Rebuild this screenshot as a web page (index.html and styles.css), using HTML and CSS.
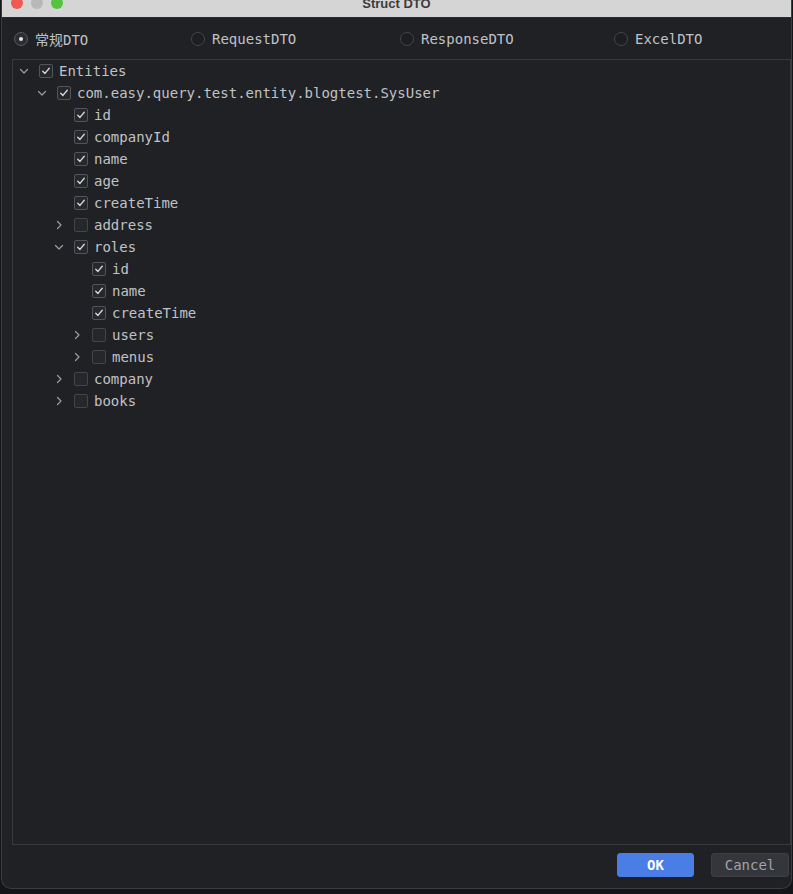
FILE: index.html
```html
<!DOCTYPE html>
<html>
<head>
<meta charset="utf-8">
<link rel="stylesheet" href="styles.css">
</head>
<body>
<div class="window">
  <div class="titlebar">
    <div class="lights">
      <span class="light red"></span>
      <span class="light grey"></span>
      <span class="light green"></span>
    </div>
    <div class="title">Struct DTO</div>
    <div></div>
  </div>
  <div class="radios">
    <label class="radio"><span class="dot on"></span><span>常规DTO</span></label>
    <label class="radio"><span class="dot"></span><span>RequestDTO</span></label>
    <label class="radio"><span class="dot"></span><span>ResponseDTO</span></label>
    <label class="radio"><span class="dot"></span><span>ExcelDTO</span></label>
  </div>
  <div class="panel">
    <div class="row l0"><span class="chev"><svg width="10" height="10" viewBox="0 0 10 10"><path d="M1.5 3.5 L5 7 L8.5 3.5" /></svg></span><span class="cb on"><svg viewBox="0 0 14 14"><path d="M3.2 7.2 L5.8 9.8 L10.8 3.8"/></svg></span><span class="txt">Entities</span></div>
    <div class="row l1"><span class="chev"><svg width="10" height="10" viewBox="0 0 10 10"><path d="M1.5 3.5 L5 7 L8.5 3.5" /></svg></span><span class="cb on"><svg viewBox="0 0 14 14"><path d="M3.2 7.2 L5.8 9.8 L10.8 3.8"/></svg></span><span class="txt">com.easy.query.test.entity.blogtest.SysUser</span></div>
    <div class="row l2"><span class="chev"></span><span class="cb on"><svg viewBox="0 0 14 14"><path d="M3.2 7.2 L5.8 9.8 L10.8 3.8"/></svg></span><span class="txt">id</span></div>
    <div class="row l2"><span class="chev"></span><span class="cb on"><svg viewBox="0 0 14 14"><path d="M3.2 7.2 L5.8 9.8 L10.8 3.8"/></svg></span><span class="txt">companyId</span></div>
    <div class="row l2"><span class="chev"></span><span class="cb on"><svg viewBox="0 0 14 14"><path d="M3.2 7.2 L5.8 9.8 L10.8 3.8"/></svg></span><span class="txt">name</span></div>
    <div class="row l2"><span class="chev"></span><span class="cb on"><svg viewBox="0 0 14 14"><path d="M3.2 7.2 L5.8 9.8 L10.8 3.8"/></svg></span><span class="txt">age</span></div>
    <div class="row l2"><span class="chev"></span><span class="cb on"><svg viewBox="0 0 14 14"><path d="M3.2 7.2 L5.8 9.8 L10.8 3.8"/></svg></span><span class="txt">createTime</span></div>
    <div class="row l2"><span class="chev"><svg width="10" height="10" viewBox="0 0 10 10"><path d="M3.5 1.5 L7 5 L3.5 8.5" /></svg></span><span class="cb"></span><span class="txt">address</span></div>
    <div class="row l2"><span class="chev"><svg width="10" height="10" viewBox="0 0 10 10"><path d="M1.5 3.5 L5 7 L8.5 3.5" /></svg></span><span class="cb on"><svg viewBox="0 0 14 14"><path d="M3.2 7.2 L5.8 9.8 L10.8 3.8"/></svg></span><span class="txt">roles</span></div>
    <div class="row l3"><span class="chev"></span><span class="cb on"><svg viewBox="0 0 14 14"><path d="M3.2 7.2 L5.8 9.8 L10.8 3.8"/></svg></span><span class="txt">id</span></div>
    <div class="row l3"><span class="chev"></span><span class="cb on"><svg viewBox="0 0 14 14"><path d="M3.2 7.2 L5.8 9.8 L10.8 3.8"/></svg></span><span class="txt">name</span></div>
    <div class="row l3"><span class="chev"></span><span class="cb on"><svg viewBox="0 0 14 14"><path d="M3.2 7.2 L5.8 9.8 L10.8 3.8"/></svg></span><span class="txt">createTime</span></div>
    <div class="row l3"><span class="chev"><svg width="10" height="10" viewBox="0 0 10 10"><path d="M3.5 1.5 L7 5 L3.5 8.5" /></svg></span><span class="cb"></span><span class="txt">users</span></div>
    <div class="row l3"><span class="chev"><svg width="10" height="10" viewBox="0 0 10 10"><path d="M3.5 1.5 L7 5 L3.5 8.5" /></svg></span><span class="cb"></span><span class="txt">menus</span></div>
    <div class="row l2"><span class="chev"><svg width="10" height="10" viewBox="0 0 10 10"><path d="M3.5 1.5 L7 5 L3.5 8.5" /></svg></span><span class="cb"></span><span class="txt">company</span></div>
    <div class="row l2"><span class="chev"><svg width="10" height="10" viewBox="0 0 10 10"><path d="M3.5 1.5 L7 5 L3.5 8.5" /></svg></span><span class="cb"></span><span class="txt">books</span></div>
  </div>
  <div class="footer">
    <button class="btn ok">OK</button>
    <button class="btn cancel">Cancel</button>
  </div>
</div>
</body>
</html>
```

FILE: styles.css
```css
* { box-sizing: border-box; }
html, body { margin: 0; padding: 0; }
body {
  background: #141518;
  width: 793px;
  height: 894px;
  overflow: hidden;
  font-family: "DejaVu Sans Mono", "Noto Sans CJK SC", monospace;
  color: #c0c2c7;
}
.window {
  margin-left: 1px;
  width: 791px;
  height: 889px;
  background: #1f2125;
  border: 1px solid #3a3c41;
  border-top: none;
  border-radius: 0 0 10px 10px;
  display: flex;
  flex-direction: column;
  overflow: hidden;
}
.titlebar {
  height: 18px;
  flex: none;
  background: #d5d5d5;
  border-bottom: 1px solid #2a2a2a;
  display: grid;
  grid-template-columns: 1fr auto 1fr;
  align-items: start;
}
.lights {
  display: flex;
  gap: 8px;
  padding-left: 9px;
  margin-top: -3px;
}
.light {
  width: 12px;
  height: 12px;
  border-radius: 50%;
  display: block;
}
.red { background: #ee5a52; }
.grey { background: #b8b8b8; }
.green { background: #55c33f; }
.title {
  font-family: "Liberation Sans", Arial, sans-serif;
  font-weight: bold;
  font-size: 13px;
  line-height: 13px;
  margin-top: -3px;
  color: #3c3c3c;
}
.radios {
  height: 41px;
  flex: none;
  display: grid;
  grid-template-columns: 177px 209px 214px 1fr;
  align-items: center;
  padding-left: 12px;
  font-size: 14px;
}
.radio {
  display: flex;
  align-items: center;
  gap: 7px;
}
.dot {
  width: 14px;
  height: 14px;
  border-radius: 50%;
  border: 1px solid #43464b;
  background: #1c1e21;
  display: flex;
  align-items: center;
  justify-content: center;
}
.dot.on {
  border-color: #55585e;
  background: #2b2d31;
}
.dot.on::after {
  content: "";
  width: 4px;
  height: 4px;
  border-radius: 50%;
  background: #e4e5e8;
}
.panel {
  flex: none;
  height: 786px;
  margin-left: 10px;
  width: 779px;
  border: 1px solid #37393e;
}
.row {
  height: 22px;
  display: flex;
  align-items: center;
  font-size: 14px;
  white-space: nowrap;
}
.l0 { padding-left: 3px; }
.l1 { padding-left: 21px; }
.l2 { padding-left: 38px; }
.l3 { padding-left: 56px; }
.chev {
  width: 16px;
  height: 16px;
  display: flex;
  align-items: center;
  justify-content: center;
  margin-right: 7px;
}
.chev svg path {
  fill: none;
  stroke: #9a9da3;
  stroke-width: 1.2;
  stroke-linecap: round;
  stroke-linejoin: round;
}
.cb {
  width: 14px;
  height: 14px;
  border: 1px solid #42454a;
  border-radius: 2px;
  background: #25272b;
  margin-right: 6px;
  display: flex;
}
.cb.on {
  border-color: #51545a;
  background: #26282c;
}
.cb svg {
  width: 12px;
  height: 12px;
}
.cb svg path {
  fill: none;
  stroke: #d5d7dc;
  stroke-width: 1.6;
  stroke-linecap: round;
  stroke-linejoin: round;
}
.txt { line-height: 22px; }
.footer {
  flex: 1;
  display: flex;
  justify-content: flex-end;
  align-items: flex-start;
  gap: 17px;
  padding-top: 8px;
  padding-right: 2px;
}
.btn {
  width: 78px;
  height: 24px;
  border-radius: 3px;
  font-family: "DejaVu Sans Mono", monospace;
  font-size: 14px;
  padding: 0;
}
.ok {
  width: 77px;
  background: #4a7ee6;
  border: 1px solid #4a7ee6;
  color: #ffffff;
  font-weight: bold;
}
.cancel {
  background: #34363b;
  border: 1px solid #3d3f44;
  color: #9fa2a8;
}
```
